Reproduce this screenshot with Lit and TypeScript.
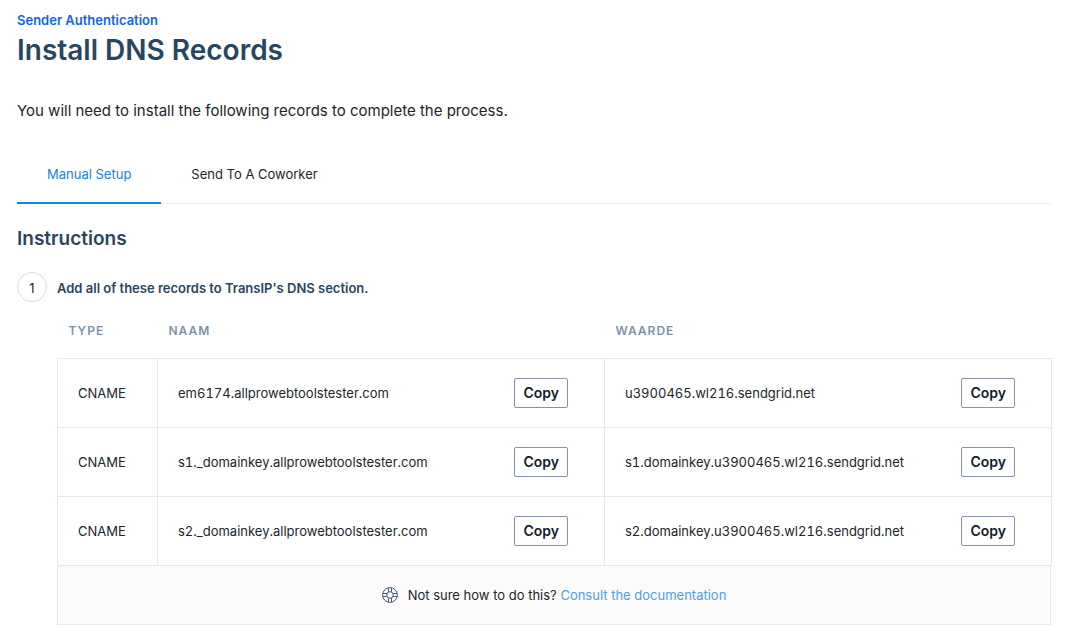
import { LitElement, html, css } from "lit";
import { customElement, property, state } from "lit/decorators.js";
import { classMap } from "lit/directives/class-map.js";

interface DnsRecord {
  type: string;
  host: string;
  value: string;
}

@customElement("copy-field")
class CopyField extends LitElement {
  @property() value = "";

  static styles = css`
    :host {
      display: flex;
      align-items: center;
      justify-content: space-between;
      gap: 12px;
    }
    .copy {
      flex: none;
      height: 30px;
      padding: 0 8px;
      border: 1px solid #8891ac;
      border-radius: 2px;
      background: #fff;
      color: #121c2d;
      font: 600 14px/20px Inter, sans-serif;
      cursor: pointer;
    }
  `;

  private copy() {
    navigator.clipboard?.writeText(this.value);
  }

  render() {
    return html`
      <span>${this.value}</span>
      <button class="copy" type="button" @click=${this.copy}>Copy</button>
    `;
  }
}

@customElement("app-root")
class AppRoot extends LitElement {
  @state() private active = 0;

  private tabs = ["Manual Setup", "Send To A Coworker"];

  private records: DnsRecord[] = [
    { type: "CNAME", host: "em6174.allprowebtoolstester.com", value: "u3900465.wl216.sendgrid.net" },
    { type: "CNAME", host: "s1._domainkey.allprowebtoolstester.com", value: "s1.domainkey.u3900465.wl216.sendgrid.net" },
    { type: "CNAME", host: "s2._domainkey.allprowebtoolstester.com", value: "s2.domainkey.u3900465.wl216.sendgrid.net" },
  ];

  static styles = css`
    :host {
      display: block;
      box-sizing: border-box;
      padding: 10px 18px 4px 17px;
      background: #fff;
      color: #1c252c;
      font: 400 13px/20px Inter, sans-serif;
    }
    a {
      text-decoration: none;
    }
    h1,
    h2,
    h3,
    p {
      margin: 0;
    }
    .crumb {
      display: block;
      color: #1264e6;
      font-weight: 600;
    }
    h1 {
      color: #294661;
      font-size: 28px;
      font-weight: 600;
      line-height: 40px;
    }
    .lead {
      margin-top: 31px;
      font-size: 15px;
    }
    .tabs {
      display: flex;
      margin-top: 24px;
      border-bottom: 1px solid #e9ecef;
    }
    .tab {
      height: 59px;
      margin-bottom: -1px;
      padding: 0 30px;
      border: 0;
      border-bottom: 2px solid transparent;
      background: none;
      color: inherit;
      font: inherit;
      cursor: pointer;
    }
    .tab.active {
      border-bottom-color: #1a82e2;
      color: #1a82e2;
    }
    h2 {
      margin-top: 20px;
      color: #294661;
      font-size: 19px;
      font-weight: 600;
      line-height: 30px;
    }
    .step {
      display: flex;
      align-items: center;
      gap: 10px;
      margin-top: 18px;
    }
    .number {
      box-sizing: border-box;
      width: 30px;
      height: 30px;
      border: 1px solid #d5dbe1;
      border-radius: 50%;
      line-height: 30px;
      text-align: center;
    }
    h3 {
      padding-top: 2px;
      color: #294661;
      font-size: 13px;
      font-weight: 600;
    }
    .records {
      margin-left: 40px;
    }
    table {
      width: calc(100% + 1px);
      border-collapse: collapse;
      table-layout: fixed;
      font-variant-numeric: tabular-nums;
    }
    .type {
      width: 100px;
    }
    th {
      box-sizing: border-box;
      height: 56px;
      padding: 2px 11px 0;
      color: #7c93a7;
      font-size: 12px;
      font-weight: 600;
      letter-spacing: 1px;
      text-align: left;
      text-transform: uppercase;
    }
    td {
      box-sizing: border-box;
      height: 69px;
      padding: 0 20px;
      border: 1px solid #e5e8eb;
    }
    .field {
      padding-right: 36px;
    }
    .help {
      display: flex;
      align-items: center;
      justify-content: center;
      gap: 10px;
      height: 58px;
      border: 1px solid #e9ebed;
      border-top: 0;
      background: #fbfbfb;
    }
    .help a {
      color: #4c9fe9;
    }
    svg {
      display: block;
      width: 16px;
      height: 16px;
      fill: none;
      stroke: #465878;
    }
  `;

  render() {
    return html`
      <a class="crumb" href="#">Sender Authentication</a>
      <h1>Install DNS Records</h1>
      <p class="lead">You will need to install the following records to complete the process.</p>
      <div class="tabs" role="tablist">
        ${this.tabs.map(
          (label, i) => html`<button
            class=${classMap({ tab: true, active: i === this.active })}
            type="button"
            role="tab"
            aria-selected=${i === this.active}
            @click=${() => (this.active = i)}
          >${label}</button>`
        )}
      </div>
      <h2>Instructions</h2>
      <div class="step">
        <span class="number">1</span>
        <h3>Add all of these records to TransIP's DNS section.</h3>
      </div>
      <div class="records">
        <table>
          <thead>
            <tr>
              <th class="type" scope="col">Type</th>
              <th scope="col">Naam</th>
              <th scope="col">Waarde</th>
            </tr>
          </thead>
          <tbody>
            ${this.records.map(
              (r) => html`<tr>
                <td>${r.type}</td>
                <td class="field"><copy-field .value=${r.host}></copy-field></td>
                <td class="field"><copy-field .value=${r.value}></copy-field></td>
              </tr>`
            )}
          </tbody>
        </table>
        <div class="help">
          <svg viewBox="0 0 16 16" aria-hidden="true">
            <circle cx="8" cy="8" r="7.4" />
            <circle cx="8" cy="8" r="3.3" />
            <path d="M6.5 .8v4.1M9.5 .8v4.1M6.5 11.1v4.1M9.5 11.1v4.1M.8 6.5h4.1M.8 9.5h4.1M11.1 6.5h4.1M11.1 9.5h4.1" />
          </svg>
          <span>Not sure how to do this? <a href="#">Consult the documentation</a></span>
        </div>
      </div>
    `;
  }
}
